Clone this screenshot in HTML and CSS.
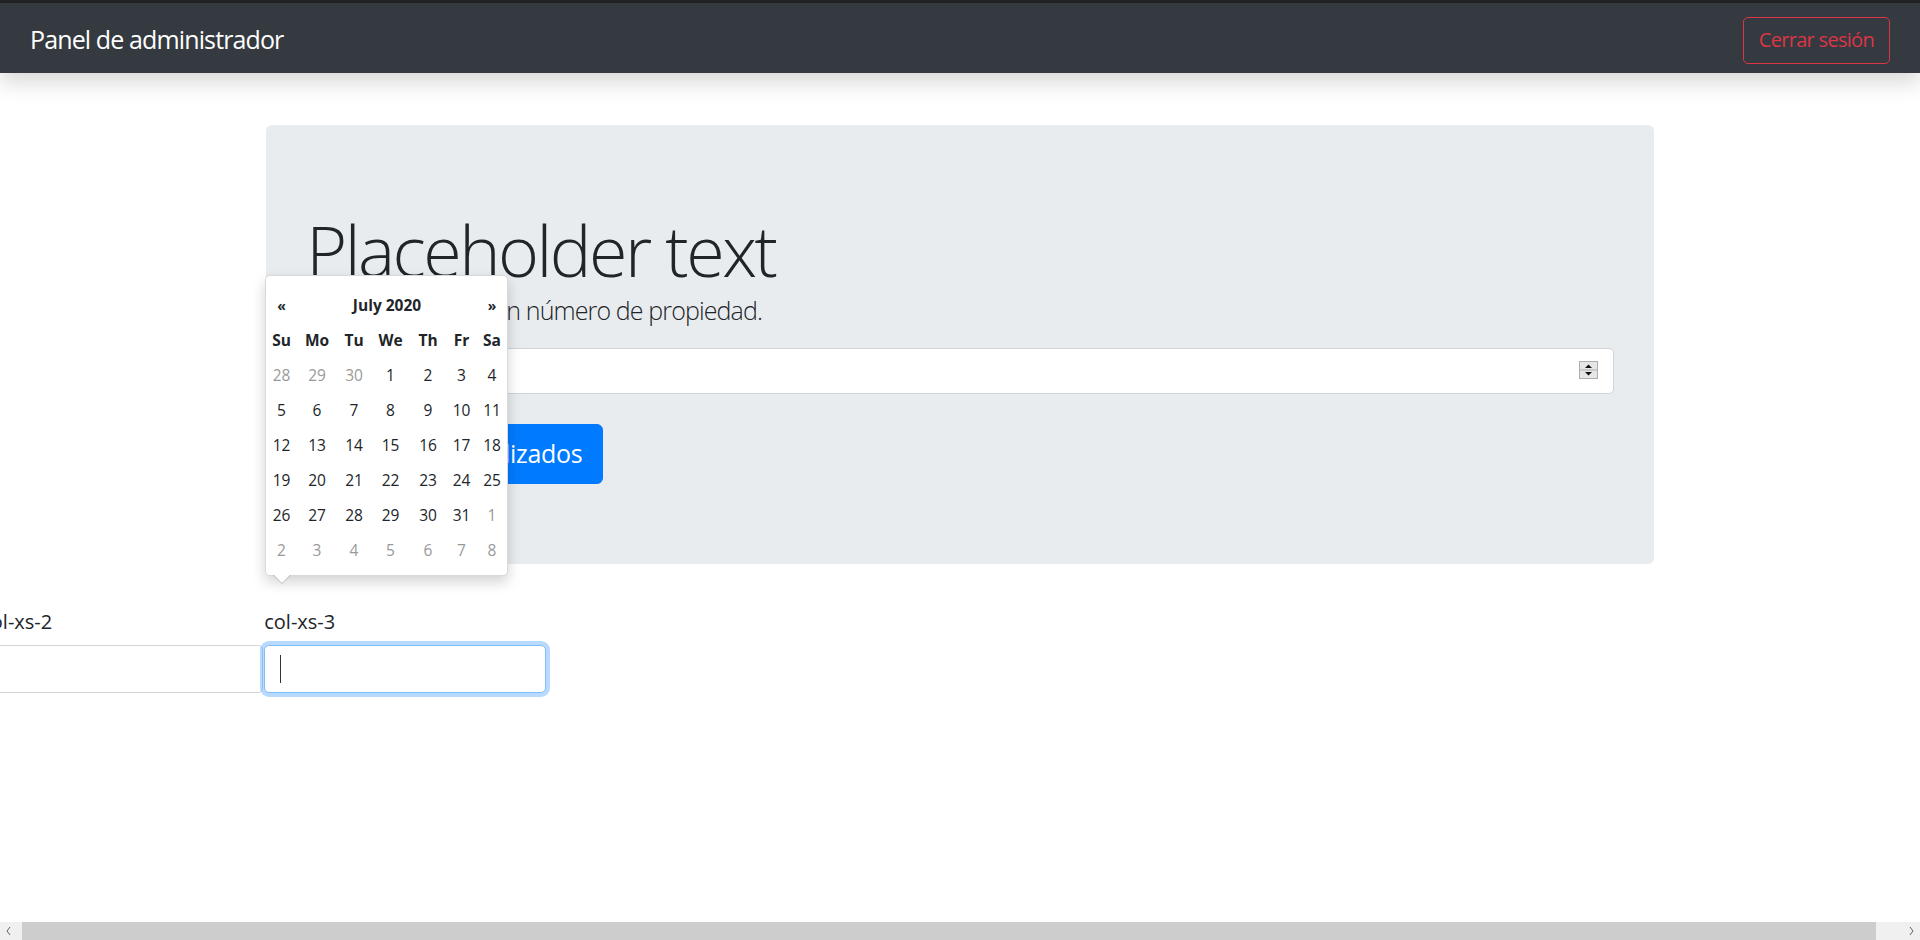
FILE: index.html
```html
<!DOCTYPE html>
<html lang="es">
<head>
<meta charset="utf-8">
<title>Panel de administrador</title>
<link rel="stylesheet" href="styles.css">
</head>
<body>
<nav class="navbar">
  <span class="brand">Panel de administrador</span>
  <button class="btn btn-outline-danger" type="button">Cerrar sesión</button>
</nav>

<main class="container">
  <section class="jumbotron">
    <h1 class="display">Placeholder text</h1>
    <p class="lead">Por favor, ingrese un número de propiedad.</p>
    <div class="num-field">
      <input class="form-control" type="text" aria-label="Número de propiedad">
      <span class="spinner" aria-hidden="true">
        <svg width="19" height="18" viewBox="0 0 19 18">
          <rect x="0.5" y="0.5" width="18" height="17" fill="#e6e6e6" stroke="#adadad"/>
          <line x1="1" y1="9" x2="18" y2="9" stroke="#adadad"/>
          <path d="M6 7 L9.5 3.5 L13 7 Z" fill="#111"/>
          <path d="M6 11 L9.5 14.5 L13 11 Z" fill="#111"/>
        </svg>
      </span>
    </div>
    <button class="btn btn-primary btn-lg" type="button">Ver datos actualizados</button>
  </section>

  <div class="date-row">
    <div class="col col-a">
      <label class="col-label">col-xs-2</label>
      <input class="form-control" type="text">
    </div>
    <div class="col col-b">
      <label class="col-label">col-xs-3</label>
      <div class="focus-field">
        <input class="form-control is-focused" type="text">
        <span class="caret"></span>
      </div>
    </div>
  </div>
</main>

<div class="datepicker">
  <div class="dp-grid">
    <div class="dp-nav">«</div>
    <div class="dp-title">July 2020</div>
    <div class="dp-nav">»</div>
    <div class="dow">Su</div><div class="dow">Mo</div><div class="dow">Tu</div><div class="dow">We</div><div class="dow">Th</div><div class="dow">Fr</div><div class="dow">Sa</div>
    <div class="day old">28</div><div class="day old">29</div><div class="day old">30</div><div class="day">1</div><div class="day">2</div><div class="day">3</div><div class="day">4</div>
    <div class="day">5</div><div class="day">6</div><div class="day">7</div><div class="day">8</div><div class="day">9</div><div class="day">10</div><div class="day">11</div>
    <div class="day">12</div><div class="day">13</div><div class="day">14</div><div class="day">15</div><div class="day">16</div><div class="day">17</div><div class="day">18</div>
    <div class="day">19</div><div class="day">20</div><div class="day">21</div><div class="day">22</div><div class="day">23</div><div class="day">24</div><div class="day">25</div>
    <div class="day">26</div><div class="day">27</div><div class="day">28</div><div class="day">29</div><div class="day">30</div><div class="day">31</div><div class="day new">1</div>
    <div class="day new">2</div><div class="day new">3</div><div class="day new">4</div><div class="day new">5</div><div class="day new">6</div><div class="day new">7</div><div class="day new">8</div>
  </div>
</div>

<div class="hscroll" aria-hidden="true">
  <span class="hs-btn">
    <svg width="17" height="18" viewBox="0 0 17 18"><path d="M10 5 L7 9 L10 13" fill="none" stroke="#606060" stroke-width="1"/></svg>
  </span>
  <span class="hs-track"><span class="hs-thumb"></span></span>
  <span class="hs-btn">
    <svg width="17" height="18" viewBox="0 0 17 18"><path d="M7 5 L10 9 L7 13" fill="none" stroke="#606060" stroke-width="1"/></svg>
  </span>
</div>
</body>
</html>
```

FILE: styles.css
```css
* {
  box-sizing: border-box;
}

html, body {
  margin: 0;
  padding: 0;
}

body {
  font-family: "Open Sans", "Noto Sans", "DejaVu Sans", sans-serif;
  font-size: 20px;
  line-height: 1.5;
  color: #212529;
  background: #fff;
  height: 940px;
  overflow: hidden;
  position: relative;
}

/* ---------- navbar ---------- */
.navbar {
  display: flex;
  justify-content: space-between;
  align-items: center;
  height: 73px;
  padding: 2px 30px 0 30px;
  background: #343a40;
  border-top: 3px solid #222;
  box-shadow: 0 10px 20px rgba(0, 0, 0, 0.15);
  position: relative;
  z-index: 2;
}

.brand {
  color: #fff;
  font-size: 25px;
  line-height: 37.5px;
  letter-spacing: -0.035em;
  margin-top: 2px;
}

.btn {
  font-family: inherit;
  display: inline-block;
  font-size: 20px;
  line-height: 30px;
  padding: 7.5px 15px;
  border: 1px solid transparent;
  border-radius: 5px;
  background: transparent;
  cursor: pointer;
}

.btn-outline-danger {
  color: #dc3545;
  border-color: #dc3545;
  letter-spacing: -0.035em;
  margin-top: 2px;
}

.btn-primary {
  color: #fff;
  background: #007bff;
  border-color: #007bff;
}

.btn-lg {
  font-size: 25px;
  line-height: 37.5px;
  padding: 10px 20px;
  border-radius: 6px;
  letter-spacing: -0.012em;
}

/* ---------- main ---------- */
.container {
  width: 1425px;
  margin: 0 auto;
  padding: 0 18.75px;
}

.jumbotron {
  margin-top: 52px;
  background: #e9ecef;
  border-radius: 6px;
  padding: 80px 40px;
}

.display {
  margin: 9px 0 0 0;
  font-size: 70px;
  font-weight: 300;
  line-height: 72px;
  letter-spacing: -0.036em;
}

.lead {
  margin: 7px 0 21px 0;
  font-size: 25px;
  font-weight: 300;
  line-height: 34px;
  letter-spacing: -0.035em;
}

.num-field {
  position: relative;
}

.form-control {
  display: block;
  width: 100%;
  height: 47.5px;
  padding: 7.5px 15px;
  font-family: inherit;
  font-size: 20px;
  line-height: 30px;
  color: #495057;
  background: #fff;
  border: 1px solid #ced4da;
  border-radius: 5px;
  outline: none;
}

.num-field .form-control {
  height: 46px;
}

.spinner {
  position: absolute;
  right: 16px;
  top: 13px;
  width: 19px;
  height: 18px;
  display: block;
  line-height: 0;
}

.jumbotron .btn-primary {
  margin-top: 30px;
}

/* ---------- bottom row ---------- */
.date-row {
  display: flex;
  gap: 1px;
  margin-top: 43.5px;
  margin-left: -285px;
}

.col-a {
  width: 282px;
}

.col-b {
  width: 282px;
}

.col-label {
  display: block;
  font-size: 20px;
  line-height: 30px;
  margin-bottom: 8px;
}

.focus-field {
  position: relative;
}

.form-control.is-focused {
  border-color: #80bdff;
  box-shadow: 0 0 0 4px rgba(0, 123, 255, 0.28);
}

.caret {
  position: absolute;
  left: 16px;
  top: 10px;
  width: 1px;
  height: 28px;
  background: #333;
}

/* ---------- datepicker ---------- */
.datepicker {
  position: absolute;
  left: 265px;
  top: 275px;
  width: 243px;
  height: 301px;
  background: #fff;
  border: 1px solid rgba(0, 0, 0, 0.15);
  border-radius: 5px;
  box-shadow: 0 6px 14px rgba(0, 0, 0, 0.18);
  z-index: 3;
  padding-top: 12.5px;
  font-size: 15.5px;
  color: #212529;
}

.datepicker::before {
  content: "";
  position: absolute;
  left: 7px;
  bottom: -9px;
  border-left: 9px solid transparent;
  border-right: 9px solid transparent;
  border-top: 9px solid rgba(0, 0, 0, 0.2);
}

.datepicker::after {
  content: "";
  position: absolute;
  left: 8px;
  bottom: -8px;
  border-left: 8px solid transparent;
  border-right: 8px solid transparent;
  border-top: 8px solid #fff;
}

.dp-grid {
  display: grid;
  grid-template-columns: 31px 40px 34px 39px 36px 31px 30px;
  grid-auto-rows: 35px;
}

.dp-grid > div {
  display: flex;
  align-items: center;
  justify-content: center;
  line-height: 1;
}

.dp-nav {
  font-weight: 700;
  font-size: 14px;
}

.dp-title {
  grid-column: span 5;
  font-weight: 700;
}

.dow {
  font-weight: 700;
}

.day.old,
.day.new {
  color: #999;
}

/* ---------- fake horizontal scrollbar ---------- */
.hscroll {
  position: fixed;
  left: 0;
  right: 0;
  bottom: 0;
  height: 18px;
  display: flex;
  background: #f0f0f0;
  z-index: 5;
}

.hs-btn {
  width: 17px;
  height: 18px;
  line-height: 0;
  flex: none;
}

.hs-track {
  flex: 1;
  display: flex;
  padding-left: 5px;
}

.hs-thumb {
  width: 1854px;
  height: 18px;
  background: #cdcdcd;
}
```
